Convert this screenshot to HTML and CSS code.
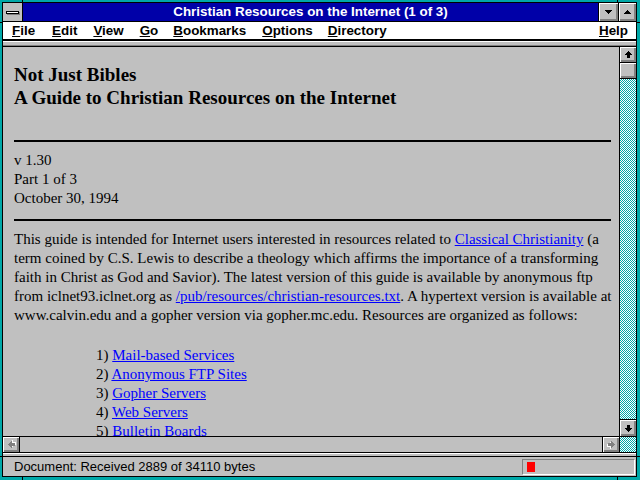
FILE: index.html
```html
<!DOCTYPE html>
<html lang="en">
<head>
    <meta charset="UTF-8">
    <title>Christian Resources on the Internet (1 of 3)</title>
    <link rel="stylesheet" href="styles.css">
</head>
<body>

<div class="window">
    <div class="frame">
        <div class="titlebar">
            <div class="sysmenu"><span class="sysmenu-bar"></span></div>
            <div class="caption">Christian Resources on the Internet (1 of 3)</div>
            <div class="capbtn capbtn-min">
                <svg class="tri" width="7" height="4" viewBox="0 0 7 4"><path d="M0 0h7v1H6v1H5v1H4v1H3V3H2V2H1V1H0z"/></svg>
            </div>
            <div class="capbtn capbtn-max">
                <svg class="tri tri-up" width="7" height="4" viewBox="0 0 7 4"><path d="M0 0h7v1H6v1H5v1H4v1H3V3H2V2H1V1H0z"/></svg>
            </div>
        </div>

        <div class="menubar">
            <span class="menu"><u>F</u>ile</span>
            <span class="menu menu-edit"><u>E</u>dit</span>
            <span class="menu"><u>V</u>iew</span>
            <span class="menu"><u>G</u>o</span>
            <span class="menu menu-tight"><u>B</u>ookmarks</span>
            <span class="menu"><u>O</u>ptions</span>
            <span class="menu menu-tight"><u>D</u>irectory</span>
            <span class="menu menu-help"><u>H</u>elp</span>
        </div>
        <div class="toolbar-edge"></div>

        <div class="viewport">
            <div class="view-row">
                <div class="page">
                    <h1 class="doc-title">Not Just Bibles<br>A Guide to Christian Resources on the Internet</h1>
                    <hr>
                    <p class="version">v 1.30<br>Part 1 of 3<br>October 30, 1994</p>
                    <hr>
                    <p class="intro">This guide is intended for Internet users interested in resources related to <a href="#">Classical Christianity</a> (a term coined by C.S. Lewis to describe a theology which affirms the importance of a transforming faith in Christ as God and Savior). The latest version of this guide is available by anonymous ftp from iclnet93.iclnet.org as <a href="#">/pub/resources/christian-resources.txt</a>. A hypertext version is available at www.calvin.edu and a gopher version via gopher.mc.edu. Resources are organized as follows:</p>
                    <ul class="contents">
                        <li>1) <a href="#">Mail-based Services</a></li>
                        <li>2) <a href="#">Anonymous FTP Sites</a></li>
                        <li>3) <a href="#">Gopher Servers</a></li>
                        <li>4) <a href="#">Web Servers</a></li>
                        <li>5) <a href="#">Bulletin Boards</a></li>
                    </ul>
                </div>
                <div class="vscroll">
                    <div class="sbtn">
                        <svg class="arrow" width="7" height="7" viewBox="0 0 7 7"><path d="M3 0h1v1h1v1h1v1h1v1H5v3H2V4H0V3h1V2h1V1h1z"/></svg>
                    </div>
                    <div class="sbtn thumb"></div>
                    <div class="track"></div>
                    <div class="sbtn sbtn-down">
                        <svg class="arrow arrow-down" width="7" height="7" viewBox="0 0 7 7"><path d="M3 0h1v1h1v1h1v1h1v1H5v3H2V4H0V3h1V2h1V1h1z"/></svg>
                    </div>
                </div>
            </div>
            <div class="hscroll">
                <div class="hbtn hbtn-left">
                    <svg class="arrow arrow-left off" width="7" height="7" viewBox="0 0 7 7"><path d="M3 0h1v1h1v1h1v1h1v1H5v3H2V4H0V3h1V2h1V1h1z"/></svg>
                </div>
                <div class="htrack"></div>
                <div class="hbtn hbtn-right">
                    <svg class="arrow arrow-right off" width="7" height="7" viewBox="0 0 7 7"><path d="M3 0h1v1h1v1h1v1h1v1H5v3H2V4H0V3h1V2h1V1h1z"/></svg>
                </div>
                <div class="corner"></div>
            </div>
        </div>

        <div class="status-edge"></div>
        <div class="statusbar">
            <span class="status-text">Document: Received 2889 of 34110 bytes</span>
            <div class="progress"><span class="progress-fill"></span></div>
        </div>
    </div>

    <!-- resize ticks in the frame border -->
    <span class="grip grip-top grip-a"></span>
    <span class="grip grip-top grip-b"></span>
    <span class="grip grip-bottom grip-a"></span>
    <span class="grip grip-bottom grip-b"></span>
    <span class="grip grip-left grip-c"></span>
    <span class="grip grip-left grip-d"></span>
    <span class="grip grip-right grip-c"></span>
    <span class="grip grip-right grip-d"></span>
</div>

</body>
</html>
```

FILE: styles.css
```css
* {
    box-sizing: border-box;
}

body {
    margin: 0;
    width: 640px;
    height: 480px;
    overflow: hidden;
    background-color: #00a8a8;
}

.window {
    position: relative;
    width: 640px;
    height: 480px;
    padding: 2px 3px 3px 2px;
    background-color: #00a8a8;
}

.frame {
    height: 100%;
    border: 1px solid #000;
    background-color: #c0c0c0;
    display: flex;
    flex-direction: column;
}

/* title bar */
.titlebar {
    flex-shrink: 0;
    height: 19px;
    display: flex;
    background-color: #0000a8;
    border-bottom: 1px solid #000;
}

.sysmenu {
    width: 20px;
    background-color: #c0c0c0;
    border-right: 1px solid #000;
    display: flex;
    align-items: center;
    justify-content: center;
}

.sysmenu-bar {
    width: 13px;
    height: 3px;
    background-color: #fff;
    border: 1px solid #000;
    box-shadow: 1px 1px 0 #808080;
}

.caption {
    flex: 1;
    color: #fff;
    font: bold 13.4px/18px "Liberation Sans", Arial, sans-serif;
    text-align: center;
    white-space: nowrap;
}

.capbtn {
    border-left: 1px solid #000;
    background-color: #c0c0c0;
    box-shadow: inset 1px 1px #fff, inset -1px -1px #808080, inset -2px -2px #808080;
    display: flex;
    align-items: center;
    justify-content: center;
}

.capbtn-min {
    width: 20px;
}

.capbtn-max {
    width: 18px;
}

.tri {
    display: block;
    fill: #000;
    shape-rendering: crispEdges;
}

.tri-up {
    transform: rotate(180deg);
}

/* menu bar */
.menubar {
    flex-shrink: 0;
    height: 19px;
    display: flex;
    padding: 1px 0 0 1px;
    background-color: #fff;
    border-bottom: 2px solid #000;
    font: bold 13.4px/16px "Liberation Sans", Arial, sans-serif;
    color: #000;
}

.menu {
    padding: 0 8px;
    white-space: nowrap;
}

.menu-edit {
    padding-left: 9px;
}

.menu-tight {
    padding-left: 7px;
}

.menu-help {
    margin-left: auto;
}

.toolbar-edge {
    flex-shrink: 0;
    height: 5px;
    border-top: 1px solid #fff;
    border-bottom: 1px solid #808080;
}

/* document view */
.viewport {
    flex-shrink: 0;
    border-top: 1px solid #000;
}

.view-row {
    height: 389px;
    display: flex;
}

.page {
    width: 616px;
    height: 389px;
    overflow: hidden;
    padding: 16px 2px 0 11px;
    font: 15px/19px "Liberation Serif", "Times New Roman", serif;
    color: #000;
}

.page a {
    color: #0000ff;
    text-decoration: underline;
}

.doc-title {
    margin: 0;
    font-size: 19px;
    line-height: 23px;
    font-weight: bold;
}

.page hr {
    margin: 31px 6px 0 0;
    height: 2px;
    border: 0;
    background-color: #000;
}

.version {
    margin: 9px 0 0;
}

.version + hr {
    margin-top: 11px;
}

.intro {
    margin: 9px 0 0;
}

.contents {
    list-style: none;
    margin: 21px 0 0;
    padding-left: 82px;
}

/* scroll bars */
.vscroll {
    width: 17px;
    border-left: 1px solid #000;
    display: flex;
    flex-direction: column;
}

.sbtn,
.hbtn {
    background-color: #c0c0c0;
    box-shadow: inset 1px 1px #fff, inset -1px -1px #808080, inset -2px -2px #808080;
    display: flex;
    align-items: center;
    justify-content: center;
}

.sbtn {
    height: 16px;
    border-bottom: 1px solid #000;
}

.sbtn-down {
    height: 17px;
    border-bottom: 0;
    border-top: 1px solid #000;
}

.track,
.corner {
    background: repeating-conic-gradient(#00a8a8 0% 25%, #fff 0% 50%) 0 0 / 2px 2px;
}

.track {
    flex: 1;
}

.arrow {
    display: block;
    fill: #000;
    shape-rendering: crispEdges;
}

.arrow-down {
    transform: rotate(180deg);
}

.arrow-left {
    transform: rotate(-90deg);
}

.arrow-right {
    transform: rotate(90deg);
}

.arrow.off {
    fill: #808080;
    filter: drop-shadow(1px 1px 0 #fff);
}

.hscroll {
    height: 17px;
    display: flex;
    border-top: 1px solid #000;
    border-bottom: 1px solid #000;
}

.hbtn-left {
    width: 17px;
    border-right: 1px solid #000;
}

.htrack {
    flex: 1;
}

.hbtn-right {
    width: 18px;
    border-left: 1px solid #000;
    border-right: 1px solid #000;
}

.corner {
    width: 16px;
}

/* status bar */
.status-edge {
    flex-shrink: 0;
    height: 4px;
    border-top: 1px solid #fff;
    border-bottom: 1px solid #000;
}

.statusbar {
    flex: 1;
    display: flex;
    padding-left: 11px;
    font: 13px/19px "Liberation Sans", Arial, sans-serif;
    color: #000;
}

.progress {
    margin: 2px 1px 0 auto;
    width: 113px;
    height: 16px;
    padding: 2px 4px;
    border: 1px solid;
    border-color: #808080 #fff #fff #808080;
}

.progress-fill {
    display: block;
    width: 8px;
    height: 10px;
    background-color: #ff0000;
}

/* little black ticks on the frame border */
.grip {
    position: absolute;
    background-color: #000;
}

.grip-top,
.grip-bottom {
    width: 1px;
    height: 2px;
}

.grip-top {
    top: 0;
}

.grip-bottom {
    bottom: 0;
    height: 3px;
}

.grip-a {
    left: 22px;
}

.grip-b {
    left: 617px;
}

.grip-left,
.grip-right {
    width: 2px;
    height: 1px;
}

.grip-left {
    left: 0;
}

.grip-right {
    right: 0;
    width: 3px;
}

.grip-c {
    top: 22px;
}

.grip-d {
    top: 456px;
}
```
